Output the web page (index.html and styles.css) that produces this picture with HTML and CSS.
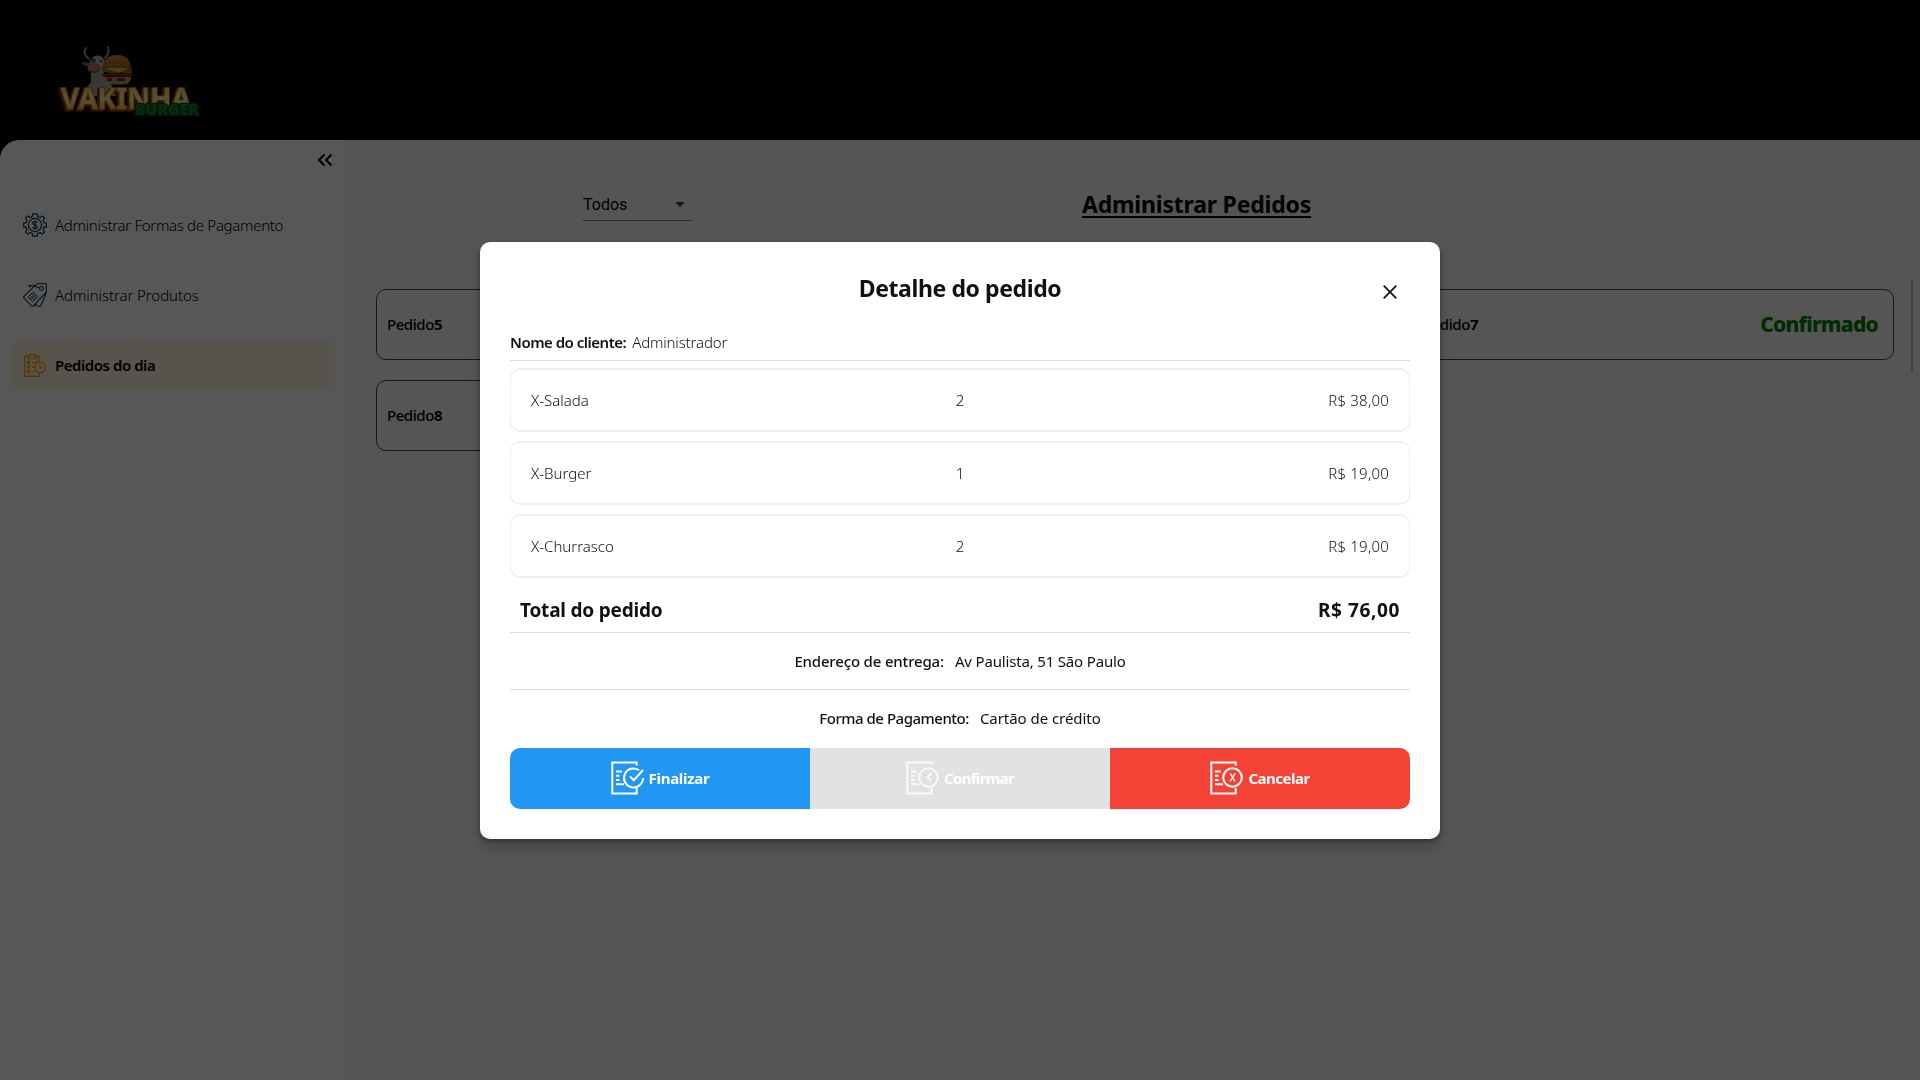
FILE: index.html
```html
<!DOCTYPE html>
<html lang="pt-BR">
<head>
<meta charset="utf-8">
<title>Vakinha Burger</title>
<link rel="stylesheet" href="styles.css">
</head>
<body>
<div class="app">
  <header class="header">
    <svg class="logo" width="150" height="82" viewBox="0 0 150 82">
      <defs>
        <linearGradient id="bun" x2="0" y2="1"><stop stop-color="#d68a3c"/><stop offset="1" stop-color="#9c4a14"/></linearGradient>
        <linearGradient id="gold" x2="0" y2="1"><stop stop-color="#e8b040"/><stop offset=".5" stop-color="#fff09a"/><stop offset="1" stop-color="#e0a030"/></linearGradient>
      </defs>
      <!-- cow -->
      <path d="M27 56Q31 48 36 42L36 28H49L49 40Q57 46 61 56Z" fill="#a5a29e"/>
      <path d="M34 19Q27 14 31 8M50 18Q55 12 53 7" fill="none" stroke="#b08c5c" stroke-width="2" stroke-linecap="round"/>
      <path d="M35 23l-9-1q2 4 9 5zM50 21l7-1q-2 5-7 5z" fill="#94705f"/>
      <ellipse cx="42.500" cy="24" rx="7.800" ry="8.500" fill="#b5b2ad"/>
      <path d="M36 18l5 1-1 4-4-1z" fill="#55483f"/>
      <circle cx="38.500" cy="22" r="1.700" fill="#286c94"/><circle cx="46" cy="21" r="1.700" fill="#286c94"/>
      <ellipse cx="39.500" cy="28" rx="7" ry="4.500" fill="#b87060"/>
      <path d="M36 31q4 3 8-1" stroke="#602820" fill="none"/>
      <!-- burger -->
      <path d="M47 30Q48 15 62 15T76 30Q62 35 47 30Z" fill="url(#bun)"/>
      <path d="M52 21l1 1M59 18l1 1M66 20l1 1M70 24l1 1M56 25l1 1M63 24l1 1" stroke="#e0b880"/>
      <path d="M47 29q4-3 8 0t8 0 7 0 7 1v3q-4 2-8 0t-7 0-8 0-7-1z" fill="#4c8f1c"/>
      <path d="M50 28H74L64 33Z" fill="#e8ac20"/>
      <path d="M47 33.500H77V36.500H47Z" fill="#a32118"/>
      <path d="M48 37H76Q76 44.500 68 44.500H55Q48 44 48 37Z" fill="#b5936b"/>
      <path d="M52 38h5v3h-5zM62 38h8v3h-8z" fill="#5f3019"/>
      <path d="M50 40q5 4 9 8l-2 2q-5-4-8-8z" fill="#b0aca6"/>
      <text class="brand" x="6" y="69" textLength="130" lengthAdjust="spacingAndGlyphs">VAKINHA</text>
      <text class="brand-sub" x="80" y="75" textLength="64" lengthAdjust="spacingAndGlyphs">BURGER</text>
    </svg>
  </header>
  <div class="body">
    <aside class="sidebar">
      <svg class="collapse" width="24" height="24" viewBox="0 0 24 24" fill="none" stroke="#000" stroke-width="2"><path d="M11.500 6.500L6 12l5.500 5.500M18.500 6.500L13 12l5.500 5.500"/></svg>
      <nav class="menu">
        <a class="menu-item pay">
          <svg width="24" height="24" viewBox="0 0 24 24" fill="none" stroke="#00384c" stroke-width="1.200"><path d="M9.800 .8h4.400l.6 2.800 2.200.9 2.400-1.600 2.200 2.200L20 7.500l.9 2.200 2.400.4v3.800l-2.400.4-.9 2.200 1.600 2.400-2.200 2.200-2.400-1.600-2.200.9-.6 2.800H9.800l-.6-2.800-2.200-.9-2.400 1.600-2.200-2.200L4 16.500l-.9-2.200-2.400-.4v-3.800l2.400-.4L4 7.500 2.400 5.100l2.200-2.200L7 4.500l2.200-.9z"/><circle cx="12" cy="12" r="6.600"/><path d="M14.300 9.700c-.3-.9-1.200-1.200-2.300-1.200-1.300 0-2.300.5-2.300 1.700 0 2.500 4.600 1.100 4.600 3.600 0 1.200-1 1.800-2.300 1.800s-2.200-.5-2.400-1.500M12 7.500v9"/></svg>
          <span>Administrar Formas de Pagamento</span>
        </a>
        <a class="menu-item products">
          <svg width="24" height="24" viewBox="0 0 24 24" fill="none" stroke="#00384c" stroke-width="1.100"><path d="M.7 13.700L13 1.700L14 .7h9.300v8.500L10 23.300H9.200L.7 14.800zM14 23.300h3.500l5.800-13M11.500 23.300l2.500-2.500"/><circle cx="18.500" cy="5.400" r="1.900"/><path d="M5.500 2.500h4.200l6.800 2.200M5.500 2.500l2 1.700"/><path d="M10.200 9l4.600 4.600-5 5-4.600-4.600zM8.700 10.500l4.600 4.600M7 12.300l4.600 4.600M12 11.500l-4.500 4.500" stroke-width=".9"/></svg>
          <span>Administrar Produtos</span>
        </a>
        <a class="menu-item active">
          <svg width="24" height="24" viewBox="0 0 24 24" fill="none" stroke="#ffa800" stroke-width="1.400"><path d="M16 9V3.200h-4V1.500H6.700v1.700H1.700v20h14.500V20M5 2.500v3h8.500v-3"/><path d="M4.500 8.500h2v2h-2zM4.500 13h2v2h-2zM4.500 17.600h2v2h-2zM9 9.500h5M9 14h2M9 18.600h3"/><circle cx="17.200" cy="14.600" r="5.300"/><path d="M17 11.500v3.300h3"/></svg>
          <span>Pedidos do dia</span>
        </a>
      </nav>
    </aside>
    <main class="main">
      <div class="toolbar">
        <div class="select"><span>Todos</span><i class="caret"></i></div>
        <h1>Administrar Pedidos</h1>
      </div>
      <div class="orders">
        <div class="order"><span class="order-name">Pedido<b>5</b></span></div>
        <div class="order"></div>
        <div class="order"><span class="order-name">Pedido<b>7</b></span><span class="status">Confirmado</span></div>
        <div class="order"><span class="order-name">Pedido<b>8</b></span></div>
      </div>
      <div class="scrollbar"></div>
    </main>
  </div>
</div>

<div class="overlay">
  <section class="dialog">
    <div class="dialog-head">
      <h2>Detalhe do pedido</h2>
      <svg class="close" width="14" height="14" viewBox="0 0 14 14" stroke="#111" stroke-width="1.700"><path d="M.7.7l12.600 12.600M13.300.7L.7 13.300"/></svg>
    </div>
    <div class="client"><strong>Nome do cliente:</strong><span>Administrador</span></div>
    <div class="items">
      <div class="item"><span>X-Salada</span><span>2</span><span class="price">R$ 38,00</span></div>
      <div class="item"><span>X-Burger</span><span>1</span><span class="price">R$ 19,00</span></div>
      <div class="item"><span>X-Churrasco</span><span>2</span><span class="price">R$ 19,00</span></div>
    </div>
    <div class="total"><span>Total do pedido</span><span class="total-price">R$ 76,00</span></div>
    <div class="info address"><strong>Endereço de entrega:</strong><span>Av Paulista, 51 São Paulo</span></div>
    <div class="info payment"><strong>Forma de Pagamento:</strong><span>Cartão de crédito</span></div>
    <div class="actions">
      <button class="action finish">
        <svg width="34" height="34" viewBox="0 0 34 34" fill="none" stroke="#fff" stroke-width="2"><path d="M25.700 4.500V1.400H1.300v31.200h24.400V27M5 10.500h6M5 14.800h3.500M5 19h3.500M5 23.200h8"/><path d="M28 9.200A9.500 9.500 0 1 0 32 17M19 15.500l3.800 3.800L32 9"/></svg>
        <span>Finalizar</span>
      </button>
      <button class="action confirm">
        <svg width="34" height="34" viewBox="0 0 34 34" fill="none" stroke="#fff" stroke-width="2"><path d="M25.700 4.500V1.400H1.300v31.200h24.400V27M5 10.500h6M5 14.800h3.500M5 19h3.500M5 23.200h8"/><circle cx="22.500" cy="16.500" r="9.300"/><path d="M25.200 12l-3.700 4 3.700 4"/></svg>
        <span>Confirmar</span>
      </button>
      <button class="action cancel">
        <svg width="34" height="34" viewBox="0 0 34 34" fill="none" stroke="#fff" stroke-width="2"><path d="M25.700 4.500V1.400H1.300v31.200h24.400V27M5 10.500h6M5 14.800h3.500M5 19h3.500M5 23.200h8"/><circle cx="22.500" cy="16.500" r="9.300"/><path d="M20.200 12.300l4.800 8M25 12.300l-4.800 8" stroke-width="1.300"/></svg>
        <span>Cancelar</span>
      </button>
    </div>
  </section>
</div>
</body>
</html>
```
FILE: styles.css
```css
* { box-sizing: border-box; }
body {
  margin: 0;
  background: #000;
  color: #000;
  font: 15px/20px "Noto Sans", sans-serif;
  overflow: hidden;
}
h1, h2 { margin: 0; font-weight: 700; font-size: 23px; line-height: 30px; }
svg { display: block; flex: none; }

.app { display: flex; flex-direction: column; height: 1080px; }
.header { height: 140px; padding: 40px 55px 0; }
.brand {
  font: 700 28px "Noto Sans", sans-serif;
  fill: url(#gold);
  stroke: #b86a10;
  stroke-width: 2px;
  paint-order: stroke;
  filter: drop-shadow(-1px 1px 0 #8a3208) drop-shadow(-1px 1px 0 #702606);
}
.brand-sub {
  font: 900 15px "Noto Sans", sans-serif;
  fill: #0b8428;
  stroke: #123d1c;
  stroke-width: 2.5px;
  paint-order: stroke;
}

.body {
  flex: 1;
  display: flex;
  background: #f8f8f8;
  border-top-left-radius: 20px;
  overflow: hidden;
}
.sidebar { width: 345px; padding: 8px 10px 0; background: #fff; }
.collapse { margin: 0 -2px 0 auto; }
.menu { display: flex; flex-direction: column; gap: 20px; margin-top: 28px; }
.menu-item {
  display: flex;
  align-items: center;
  gap: 7px;
  height: 50px;
  padding: 0 13px;
  border-radius: 10px;
  font-weight: 300;
  letter-spacing: -.08px;
}
.menu-item span { padding-left: 1px; }
.menu-item.pay { letter-spacing: -.3px; }
.menu-item.active { background: #fff5e0; font-weight: 600; letter-spacing: -.45px; }

.main { flex: 1; position: relative; padding: 44px 26px 0 31px; }
.toolbar { display: flex; height: 105px; padding-left: 207px; }
.select {
  display: flex;
  align-items: center;
  justify-content: space-between;
  width: 109px;
  height: 37px;
  padding: 5px 7px 0 0;
  border-bottom: 1px solid #808080;
  font: 16px Roboto, sans-serif;
}
.caret { border: 5px solid transparent; border-top-color: #444; border-bottom: 0; }
.toolbar h1 {
  margin: 5px 0 0 390px;
  letter-spacing: -.2px;
  text-decoration: underline 2px;
  text-underline-offset: 3px;
  text-decoration-skip-ink: none;
}
.orders { display: grid; grid-template-columns: repeat(3, 1fr); gap: 20px 36px; }
.order {
  display: flex;
  align-items: center;
  justify-content: space-between;
  height: 71px;
  padding: 0 15px 2px 10px;
  border: 1px solid #444;
  border-radius: 10px;
}
.order-name { font-weight: 500; letter-spacing: -.45px; }
.status { color: #008000; font-weight: 800; font-size: 21px; letter-spacing: -.75px; }
.scrollbar { position: absolute; top: 139px; right: 7px; width: 2px; height: 92px; background: #bbb; }

.overlay {
  position: fixed;
  inset: 0;
  display: flex;
  align-items: center;
  justify-content: center;
  background: rgba(0, 0, 0, .66);
}
.dialog {
  width: 960px;
  height: 597px;
  padding: 29px 30px;
  border-radius: 10px;
  background: #fff;
  color: #111;
  box-shadow: 0 8px 14px rgba(0, 0, 0, .22), 0 2px 4px rgba(0, 0, 0, .3);
}
.dialog-head { display: grid; grid-template-columns: 1fr auto 1fr; height: 61px; padding-right: 13px; }
.dialog-head h2 { grid-column: 2; margin: 2px -13px 0 0; letter-spacing: -.4px; }
.close { margin: 14px 0 0 auto; }
.client {
  display: flex;
  gap: 6px;
  height: 29px;
  border-bottom: 1px solid #ddd;
}
.client strong { font-weight: 600; letter-spacing: -.5px; }
.client span { font-weight: 300; letter-spacing: -.15px; }
.items { display: flex; flex-direction: column; gap: 9px; padding-top: 7px; }
.item {
  display: grid;
  grid-template-columns: 1fr auto 1fr;
  align-items: center;
  height: 64px;
  padding: 0 20px;
  border: solid #eee;
  border-width: 2px 1px;
  border-radius: 10px;
  font-weight: 300;
}
.price { text-align: right; letter-spacing: .2px; }
.total {
  display: flex;
  justify-content: space-between;
  align-items: center;
  height: 55px;
  padding: 11px 10px 0;
  border-bottom: 1px solid #ddd;
  font-size: 19px;
  font-weight: 700;
  letter-spacing: -.2px;
}
.total-price { letter-spacing: .6px; }
.info { display: flex; justify-content: center; align-items: center; gap: 11px; height: 57px; }
.info strong { font-weight: 500; }
.address { border-bottom: 1px solid #ddd; letter-spacing: -.17px; }
.payment { padding-bottom: 1px; letter-spacing: -.05px; }
.payment strong { letter-spacing: -.48px; }
.actions {
  display: flex;
  height: 61px;
  margin-top: 1px;
  border-radius: 10px;
  overflow: hidden;
}
.action {
  flex: 1;
  display: flex;
  align-items: center;
  justify-content: center;
  gap: 4px;
  padding: 0 0 1px;
  border: 0;
  color: #fff;
  font: 700 15px "Noto Sans", sans-serif;
}
.finish { background: #2196f3; letter-spacing: -.28px; }
.confirm { background: #e2e2e2; letter-spacing: -.7px; }
.cancel { background: #f44336; letter-spacing: -.5px; }
.confirm svg { opacity: .8; }
```
